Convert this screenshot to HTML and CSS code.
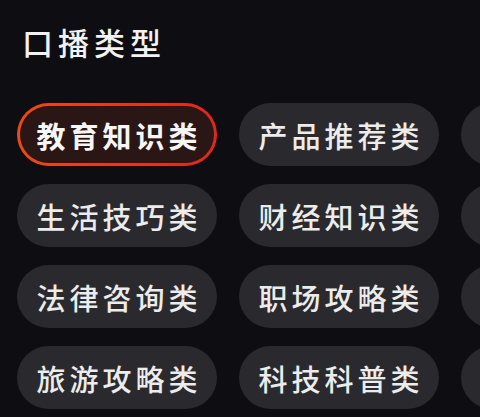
FILE: index.html
```html
<!DOCTYPE html>
<html lang="zh-CN">
<head>
<meta charset="utf-8">
<title>口播类型</title>
<link rel="stylesheet" href="styles.css">
</head>
<body>
<div class="page">
  <h1 class="title">口播类型</h1>
  <div class="grid">
    <div class="chip selected">教育知识类</div>
    <div class="chip">产品推荐类</div>
    <div class="chip">美食探店类</div>
    <div class="chip">生活技巧类</div>
    <div class="chip">财经知识类</div>
    <div class="chip">情感心理类</div>
    <div class="chip">法律咨询类</div>
    <div class="chip">职场攻略类</div>
    <div class="chip">健康养生类</div>
    <div class="chip">旅游攻略类</div>
    <div class="chip">科技科普类</div>
    <div class="chip">历史人文类</div>
  </div>
</div>
</body>
</html>
```

FILE: styles.css
```css
html, body {
  margin: 0;
  padding: 0;
  background: #0e0e12;
}
.page {
  width: 480px;
  height: 417px;
  overflow: hidden;
  font-family: "Noto Sans CJK SC", "Noto Sans", sans-serif;
  color: #f2f2f2;
}
.title {
  margin: 0;
  padding: 22px 0 0 22px;
  font-size: 31px;
  line-height: 40px;
  font-weight: 500;
  letter-spacing: 5px;
}
.grid {
  margin-top: 41px;
  padding-left: 17px;
  display: grid;
  grid-template-columns: repeat(3, 200px);
  column-gap: 22px;
  row-gap: 18px;
  width: 700px;
}
.chip {
  box-sizing: border-box;
  height: 63px;
  border-radius: 32px;
  background: #2a2a2e;
  display: flex;
  align-items: center;
  justify-content: center;
  font-size: 29px;
  font-weight: 500;
  letter-spacing: 4px;
  padding-left: 4px;
  color: #ececec;
}
.chip.selected {
  border: 3px solid transparent;
  background:
    linear-gradient(#2a1614, #2a1614) padding-box,
    linear-gradient(90deg, #ec4a18, #e0261e) border-box;
  font-weight: 700;
  color: #f6f6f6;
}
```
